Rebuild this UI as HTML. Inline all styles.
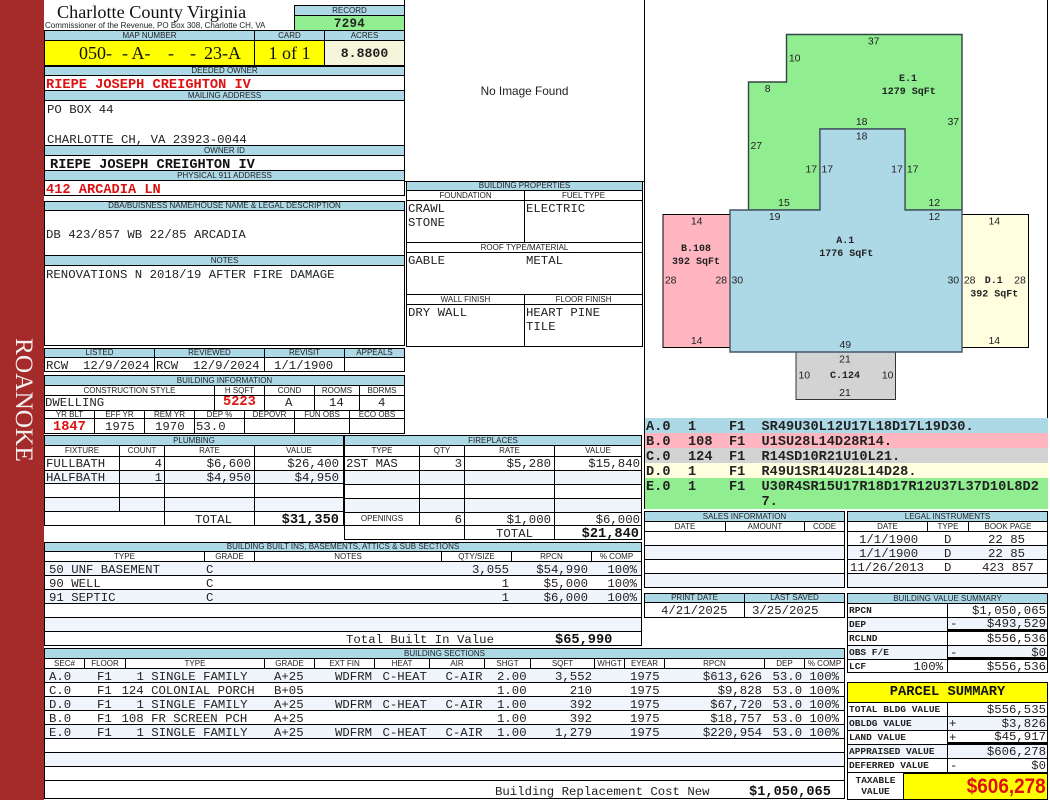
<!DOCTYPE html>
<html><head><meta charset="utf-8"><title>Charlotte County Virginia</title>
<style>
html,body{margin:0;padding:0;background:#fff}
body{position:relative;width:1050px;height:800px;overflow:hidden}
.c{position:absolute;box-sizing:border-box;border:1px solid #000;display:flex;align-items:center;justify-content:center;white-space:pre;overflow:hidden;font:8px/1 "Liberation Sans",sans-serif;color:#222;background:#fff}
.h{background:#add8e6}
.a{background:#f0f4fb}
.t{position:absolute;font:12.33px/14px "Liberation Mono",monospace;white-space:pre;color:#222;margin-top:1px}
.b{font-weight:bold;font-size:13.67px;color:#111;margin-top:2px}
.r{color:#dd1111}
.s{font:8px/14px "Liberation Sans",sans-serif}
.l{font:bold 9.5px/14px "Liberation Mono",monospace;color:#222}
.lg{font:bold 13.6px/15px "Liberation Mono",monospace;color:#222}
.y{font:18px/24px "Liberation Serif",serif;color:#111;margin-top:0}
.v{position:absolute;background:#000}
.n{text-anchor:middle;font:10.5px "Liberation Sans",sans-serif;fill:#222}
.m{text-anchor:middle;font:bold 10px "Liberation Mono",monospace;fill:#222}
</style></head><body>

<div style="position:absolute;left:0;top:0;width:44px;height:800px;background:#a52a2a"></div>
<div style="position:absolute;left:0;top:338px;width:47px;height:126px;writing-mode:vertical-rl;font:25.33px/47px 'Liberation Serif',serif;color:#f4eeee;white-space:nowrap">ROANOKE</div>

<div class="t" style="left:57px;top:2px;margin-top:0;font:18.2px/20px 'Liberation Serif',serif;color:#111">Charlotte County Virginia</div>
<div class="t s" style="left:45px;top:18px;font-size:8px">Commissioner of the Revenue, PO Box 308, Charlotte CH, VA</div>

<div class="c h" style="left:294px;top:5px;width:111px;height:11px">RECORD</div>
<div class="c" style="left:294px;top:15px;width:111px;height:16px;padding-top:2px;background:#90ee90;font:bold 12.5px 'Liberation Mono',monospace;letter-spacing:.3px">7294</div>

<div class="c h" style="left:44px;top:30px;width:211px;height:11px">MAP NUMBER</div>
<div class="c h" style="left:254px;top:30px;width:71px;height:11px">CARD</div>
<div class="c h" style="left:324px;top:30px;width:81px;height:11px">ACRES</div>
<div class="c" style="left:44px;top:40px;width:211px;height:26px;background:#ffff00"></div>
<div class="t y" style="left:79px;top:41px">050-</div>
<div class="t y" style="left:122px;top:41px">- A-</div>
<div class="t y" style="left:168px;top:41px">-</div>
<div class="t y" style="left:190px;top:41px">-</div>
<div class="t y" style="left:204px;top:41px">23-A</div>
<div class="c" style="left:254px;top:40px;width:71px;height:26px;background:#ffff00;font:18px 'Liberation Serif',serif;color:#111">1 of 1</div>
<div class="c" style="left:324px;top:40px;width:81px;height:26px;background:#f5f5dc;font:bold 13.2px 'Liberation Mono',monospace">8.8800</div>

<div class="c h" style="left:44px;top:66px;width:361px;height:10px">DEEDED OWNER</div>
<div class="c" style="left:44px;top:75px;width:361px;height:16px"></div>
<div class="t b r" style="left:46px;top:77px">RIEPE JOSEPH CREIGHTON IV</div>
<div class="c h" style="left:44px;top:90px;width:361px;height:11px">MAILING ADDRESS</div>
<div class="c" style="left:44px;top:100px;width:361px;height:46px"></div>
<div class="t" style="left:47px;top:102px">PO BOX 44</div>
<div class="t" style="left:47px;top:132px">CHARLOTTE CH, VA 23923-0044</div>
<div class="c h" style="left:44px;top:145px;width:361px;height:11px">OWNER ID</div>
<div class="c" style="left:44px;top:155px;width:361px;height:16px"></div>
<div class="t b" style="left:50px;top:157px">RIEPE JOSEPH CREIGHTON IV</div>
<div class="c h" style="left:44px;top:170px;width:361px;height:11px">PHYSICAL 911 ADDRESS</div>
<div class="c" style="left:44px;top:180px;width:361px;height:16px"></div>
<div class="t b r" style="left:46px;top:182px">412 ARCADIA LN</div>

<div class="c h" style="left:44px;top:201px;width:361px;height:10px">DBA/BUISNESS NAME/HOUSE NAME &amp; LEGAL DESCRIPTION</div>
<div class="c" style="left:44px;top:210px;width:361px;height:46px"></div>
<div class="t" style="left:46px;top:227px">DB 423/857 WB 22/85 ARCADIA</div>
<div class="c h" style="left:44px;top:255px;width:361px;height:11px">NOTES</div>
<div class="c" style="left:44px;top:265px;width:361px;height:81px"></div>
<div class="t" style="left:46px;top:267px">RENOVATIONS N 2018/19 AFTER FIRE DAMAGE</div>

<div class="c h" style="left:44px;top:348px;width:111px;height:10px">LISTED</div>
<div class="c h" style="left:154px;top:348px;width:111px;height:10px">REVIEWED</div>
<div class="c h" style="left:264px;top:348px;width:81px;height:10px">REVISIT</div>
<div class="c h" style="left:344px;top:348px;width:61px;height:10px">APPEALS</div>
<div class="c" style="left:44px;top:357px;width:111px;height:15px"></div>
<div class="c" style="left:154px;top:357px;width:111px;height:15px"></div>
<div class="c" style="left:264px;top:357px;width:81px;height:15px"></div>
<div class="c" style="left:344px;top:357px;width:61px;height:15px"></div>
<div class="t" style="left:46px;top:358px">RCW  12/9/2024</div>
<div class="t" style="left:156px;top:358px">RCW  12/9/2024</div>
<div class="t" style="left:274px;top:358px">1/1/1900</div>

<div class="c h" style="left:44px;top:375px;width:361px;height:11px">BUILDING INFORMATION</div>
<div class="c" style="left:44px;top:385px;width:171px;height:11px">CONSTRUCTION STYLE</div>
<div class="c" style="left:214px;top:385px;width:51px;height:11px">H SQFT</div>
<div class="c" style="left:264px;top:385px;width:51px;height:11px">COND</div>
<div class="c" style="left:314px;top:385px;width:46px;height:11px">ROOMS</div>
<div class="c" style="left:359px;top:385px;width:46px;height:11px">BDRMS</div>
<div class="c" style="left:44px;top:395px;width:171px;height:16px"></div>
<div class="c" style="left:214px;top:395px;width:51px;height:16px"></div>
<div class="c" style="left:264px;top:395px;width:51px;height:16px"></div>
<div class="c" style="left:314px;top:395px;width:46px;height:16px"></div>
<div class="c" style="left:359px;top:395px;width:46px;height:16px"></div>
<div class="t" style="left:45px;top:395px">DWELLING</div>
<div class="t b r" style="left:223px;top:394px">5223</div>
<div class="t" style="left:285px;top:395px">A</div>
<div class="t" style="left:329px;top:395px">14</div>
<div class="t" style="left:378px;top:395px">4</div>

<div class="c" style="left:44px;top:410px;width:51px;height:9px">YR BLT</div>
<div class="c" style="left:94px;top:410px;width:51px;height:9px">EFF YR</div>
<div class="c" style="left:144px;top:410px;width:51px;height:9px">REM YR</div>
<div class="c" style="left:194px;top:410px;width:51px;height:9px">DEP %</div>
<div class="c" style="left:244px;top:410px;width:51px;height:9px">DEPOVR</div>
<div class="c" style="left:294px;top:410px;width:56px;height:9px">FUN OBS</div>
<div class="c" style="left:349px;top:410px;width:56px;height:9px">ECO OBS</div>
<div class="c" style="left:44px;top:418px;width:51px;height:16px"></div>
<div class="c" style="left:94px;top:418px;width:51px;height:16px"></div>
<div class="c" style="left:144px;top:418px;width:51px;height:16px"></div>
<div class="c" style="left:194px;top:418px;width:51px;height:16px"></div>
<div class="c" style="left:244px;top:418px;width:51px;height:16px"></div>
<div class="c" style="left:294px;top:418px;width:56px;height:16px"></div>
<div class="c" style="left:349px;top:418px;width:56px;height:16px"></div>
<div class="t b r" style="left:53px;top:419px">1847</div>
<div class="t" style="left:105px;top:419px">1975</div>
<div class="t" style="left:155px;top:419px">1970</div>
<div class="t" style="left:196px;top:419px">53.0</div>

<!-- image box -->
<div class="c" style="left:404px;top:-1px;width:241px;height:183px;background:none;font:11.8px 'Liberation Sans',sans-serif">No Image Found</div>

<!-- building properties -->
<div class="c h" style="left:406px;top:181px;width:237px;height:10px">BUILDING PROPERTIES</div>
<div class="c" style="left:406px;top:190px;width:119px;height:11px">FOUNDATION</div>
<div class="c" style="left:524px;top:190px;width:119px;height:11px">FUEL TYPE</div>
<div class="c" style="left:406px;top:200px;width:119px;height:43px"></div>
<div class="c" style="left:524px;top:200px;width:119px;height:43px"></div>
<div class="c" style="left:406px;top:242px;width:237px;height:11px">ROOF TYPE/MATERIAL</div>
<div class="c" style="left:406px;top:252px;width:237px;height:43px"></div>
<div class="c" style="left:406px;top:294px;width:119px;height:11px">WALL FINISH</div>
<div class="c" style="left:524px;top:294px;width:119px;height:11px">FLOOR FINISH</div>
<div class="c" style="left:406px;top:304px;width:119px;height:43px"></div>
<div class="c" style="left:524px;top:304px;width:119px;height:43px"></div>
<div class="t" style="left:408px;top:201px">CRAWL</div>
<div class="t" style="left:408px;top:215px">STONE</div>
<div class="t" style="left:526px;top:201px">ELECTRIC</div>
<div class="t" style="left:408px;top:253px">GABLE</div>
<div class="t" style="left:526px;top:253px">METAL</div>
<div class="t" style="left:408px;top:305px">DRY WALL</div>
<div class="t" style="left:526px;top:305px">HEART PINE</div>
<div class="t" style="left:526px;top:319px">TILE</div>

<!-- sketch -->
<div class="c" style="left:644px;top:-1px;width:404px;height:420px"></div>
<svg style="position:absolute;left:0;top:0" width="1050" height="800">
<polygon points="663,214.5 730,214.5 730,347.5 663,347.5" fill="#ffb6c1" stroke="#000" stroke-width="1"/>
<polygon points="962,214.5 1028.5,214.5 1028.5,347.5 962,347.5" fill="#ffffe0" stroke="#000" stroke-width="1"/>
<polygon points="796,352 895.5,352 895.5,399.5 796,399.5" fill="#d3d3d3" stroke="#333" stroke-width="1"/>
<polygon points="786.5,34.5 962,34.5 962,210 905,210 905,129 820,129 820,210 748.5,210 748.5,82 786.5,82" fill="#90ee90" stroke="#344" stroke-width="1.4"/>
<polygon points="730,210 820,210 820,129 905,129 905,210 962,210 962,352 730,352" fill="#add8e6" stroke="#456" stroke-width="1.4"/>
<g class="nn">
<text class="n" x="873.7" y="44.5">37</text>
<text class="n" x="794.7" y="61.5">10</text>
<text class="n" x="767.7" y="92">8</text>
<text class="n" x="861.7" y="125">18</text>
<text class="n" x="953.3" y="125">37</text>
<text class="n" x="861.7" y="139.5">18</text>
<text class="n" x="756.3" y="149">27</text>
<text class="n" x="811.3" y="172.5">17</text>
<text class="n" x="827.3" y="172.5">17</text>
<text class="n" x="897" y="172.5">17</text>
<text class="n" x="912.7" y="172.5">17</text>
<text class="n" x="784" y="206">15</text>
<text class="n" x="934.3" y="206">12</text>
<text class="n" x="774.7" y="220">19</text>
<text class="n" x="934.3" y="220">12</text>
<text class="n" x="696.7" y="224.5">14</text>
<text class="n" x="994.3" y="224.5">14</text>
<text class="n" x="670.7" y="283.5">28</text>
<text class="n" x="721.3" y="283.5">28</text>
<text class="n" x="737.3" y="283.5">30</text>
<text class="n" x="953.3" y="283.5">30</text>
<text class="n" x="969.7" y="283.5">28</text>
<text class="n" x="1020" y="283.5">28</text>
<text class="n" x="696.7" y="344">14</text>
<text class="n" x="994.3" y="344">14</text>
<text class="n" x="845.3" y="348">49</text>
<text class="n" x="845" y="362.5">21</text>
<text class="n" x="804.3" y="378.5">10</text>
<text class="n" x="887.7" y="378.5">10</text>
<text class="n" x="845" y="396">21</text>
<text class="m" x="908" y="81">E.1</text>
<text class="m" x="908.7" y="94">1279 SqFt</text>
<text class="m" x="845.3" y="243">A.1</text>
<text class="m" x="846.3" y="256">1776 SqFt</text>
<text class="m" x="696" y="251">B.108</text>
<text class="m" x="696" y="264">392 SqFt</text>
<text class="m" x="993.7" y="283">D.1</text>
<text class="m" x="994.3" y="296.5">392 SqFt</text>
<text class="m" x="845" y="378">C.124</text>
</g>
</svg>

<!-- legend -->
<div style="position:absolute;left:644px;top:418px;width:404px;height:91px;background:#90ee90;border-left:1px solid #000;box-sizing:border-box"></div>
<div style="position:absolute;left:645px;top:418px;width:403px;height:15px;background:#add8e6"></div>
<div style="position:absolute;left:645px;top:433px;width:403px;height:15px;background:#ffb6c1"></div>
<div style="position:absolute;left:645px;top:448px;width:403px;height:15px;background:#d3d3d3"></div>
<div style="position:absolute;left:645px;top:463px;width:403px;height:15px;background:#ffffe0"></div>
<div class="t lg" style="left:646px;top:419px">A.0</div><div class="t lg" style="left:688px;top:419px">1</div><div class="t lg" style="left:729px;top:419px">F1</div><div class="t lg" style="left:761.5px;top:419px">SR49U30L12U17L18D17L19D30.</div>
<div class="t lg" style="left:646px;top:434px">B.0</div><div class="t lg" style="left:688px;top:434px">108</div><div class="t lg" style="left:729px;top:434px">F1</div><div class="t lg" style="left:761.5px;top:434px">U1SU28L14D28R14.</div>
<div class="t lg" style="left:646px;top:449px">C.0</div><div class="t lg" style="left:688px;top:449px">124</div><div class="t lg" style="left:729px;top:449px">F1</div><div class="t lg" style="left:761.5px;top:449px">R14SD10R21U10L21.</div>
<div class="t lg" style="left:646px;top:464px">D.0</div><div class="t lg" style="left:688px;top:464px">1</div><div class="t lg" style="left:729px;top:464px">F1</div><div class="t lg" style="left:761.5px;top:464px">R49U1SR14U28L14D28.</div>
<div class="t lg" style="left:646px;top:479px">E.0</div><div class="t lg" style="left:688px;top:479px">1</div><div class="t lg" style="left:729px;top:479px">F1</div><div class="t lg" style="left:761.5px;top:479px">U30R4SR15U17R18D17R12U37L37D10L8D2</div>
<div class="t lg" style="left:761.5px;top:494px">7.</div>

<!-- plumbing -->
<div class="c h" style="left:44px;top:435px;width:300px;height:11px">PLUMBING</div>
<div class="c" style="left:44px;top:445px;width:76px;height:12px">FIXTURE</div>
<div class="c" style="left:119px;top:445px;width:46px;height:12px">COUNT</div>
<div class="c" style="left:164px;top:445px;width:91px;height:12px">RATE</div>
<div class="c" style="left:254px;top:445px;width:90px;height:12px">VALUE</div>
<div class="c" style="left:44px;top:456px;width:76px;height:15px"></div><div class="c" style="left:119px;top:456px;width:46px;height:15px"></div><div class="c" style="left:164px;top:456px;width:91px;height:15px"></div><div class="c" style="left:254px;top:456px;width:90px;height:15px"></div>
<div class="c a" style="left:44px;top:470px;width:76px;height:14px"></div><div class="c a" style="left:119px;top:470px;width:46px;height:14px"></div><div class="c a" style="left:164px;top:470px;width:91px;height:14px"></div><div class="c a" style="left:254px;top:470px;width:90px;height:14px"></div>
<div class="c" style="left:44px;top:483px;width:76px;height:15px"></div><div class="c" style="left:119px;top:483px;width:46px;height:15px"></div><div class="c" style="left:164px;top:483px;width:91px;height:15px"></div><div class="c" style="left:254px;top:483px;width:90px;height:15px"></div>
<div class="c a" style="left:44px;top:497px;width:76px;height:15px"></div><div class="c a" style="left:119px;top:497px;width:46px;height:15px"></div><div class="c a" style="left:164px;top:497px;width:91px;height:15px"></div><div class="c a" style="left:254px;top:497px;width:90px;height:15px"></div>
<div class="c" style="left:44px;top:511px;width:121px;height:15px"></div><div class="c" style="left:164px;top:511px;width:91px;height:15px"></div><div class="c" style="left:254px;top:511px;width:90px;height:15px"></div>
<div class="t" style="left:46px;top:456px">FULLBATH</div><div class="t" style="right:888px;top:456px">4</div><div class="t" style="right:799px;top:456px">$6,600</div><div class="t" style="right:711px;top:456px">$26,400</div>
<div class="t" style="left:46px;top:470px">HALFBATH</div><div class="t" style="right:888px;top:470px">1</div><div class="t" style="right:799px;top:470px">$4,950</div><div class="t" style="right:711px;top:470px">$4,950</div>
<div class="t" style="left:195px;top:512px">TOTAL</div><div class="t b" style="right:711px;top:512px">$31,350</div>

<!-- fireplaces -->
<div class="c h" style="left:344px;top:435px;width:298px;height:11px">FIREPLACES</div>
<div class="c" style="left:344px;top:445px;width:76px;height:12px">TYPE</div>
<div class="c" style="left:419px;top:445px;width:46px;height:12px">QTY</div>
<div class="c" style="left:464px;top:445px;width:91px;height:12px">RATE</div>
<div class="c" style="left:554px;top:445px;width:88px;height:12px">VALUE</div>
<div class="c" style="left:344px;top:456px;width:76px;height:15px"></div><div class="c" style="left:419px;top:456px;width:46px;height:15px"></div><div class="c" style="left:464px;top:456px;width:91px;height:15px"></div><div class="c" style="left:554px;top:456px;width:88px;height:15px"></div>
<div class="c a" style="left:344px;top:470px;width:76px;height:15px"></div><div class="c a" style="left:419px;top:470px;width:46px;height:15px"></div><div class="c a" style="left:464px;top:470px;width:91px;height:15px"></div><div class="c a" style="left:554px;top:470px;width:88px;height:15px"></div>
<div class="c" style="left:344px;top:484px;width:76px;height:15px"></div><div class="c" style="left:419px;top:484px;width:46px;height:15px"></div><div class="c" style="left:464px;top:484px;width:91px;height:15px"></div><div class="c" style="left:554px;top:484px;width:88px;height:15px"></div>
<div class="c a" style="left:344px;top:498px;width:76px;height:15px"></div><div class="c a" style="left:419px;top:498px;width:46px;height:15px"></div><div class="c a" style="left:464px;top:498px;width:91px;height:15px"></div><div class="c a" style="left:554px;top:498px;width:88px;height:15px"></div>
<div class="c" style="left:344px;top:512px;width:76px;height:14px">OPENINGS</div><div class="c" style="left:419px;top:512px;width:46px;height:14px"></div><div class="c" style="left:464px;top:512px;width:91px;height:14px"></div><div class="c" style="left:554px;top:512px;width:88px;height:14px"></div>
<div class="c" style="left:344px;top:525px;width:121px;height:15px"></div><div class="c" style="left:464px;top:525px;width:91px;height:15px"></div><div class="c" style="left:554px;top:525px;width:88px;height:15px"></div>
<div class="t" style="left:346px;top:456px">2ST MAS</div><div class="t" style="right:588px;top:456px">3</div><div class="t" style="right:499px;top:456px">$5,280</div><div class="t" style="right:410px;top:456px">$15,840</div>
<div class="t" style="right:588px;top:512px">6</div><div class="t" style="right:499px;top:512px">$1,000</div><div class="t" style="right:410px;top:512px">$6,000</div>
<div class="t" style="left:496px;top:526px">TOTAL</div><div class="t b" style="right:411px;top:526px">$21,840</div>

<!-- sales -->
<div class="c h" style="left:644px;top:511px;width:201px;height:11px">SALES INFORMATION</div>
<div class="c" style="left:644px;top:521px;width:82px;height:11px">DATE</div>
<div class="c" style="left:725px;top:521px;width:80px;height:11px">AMOUNT</div>
<div class="c" style="left:804px;top:521px;width:41px;height:11px">CODE</div>
<div class="c" style="left:644px;top:531px;width:201px;height:15px"></div>
<div class="c a" style="left:644px;top:545px;width:201px;height:15px"></div>
<div class="c" style="left:644px;top:559px;width:201px;height:15px"></div>
<div class="c a" style="left:644px;top:573px;width:201px;height:15px"></div>

<!-- legal -->
<div class="c h" style="left:847px;top:511px;width:201px;height:11px">LEGAL INSTRUMENTS</div>
<div class="c" style="left:847px;top:521px;width:81px;height:11px">DATE</div>
<div class="c" style="left:927px;top:521px;width:42px;height:11px">TYPE</div>
<div class="c" style="left:968px;top:521px;width:80px;height:11px">BOOK PAGE</div>
<div class="c" style="left:847px;top:531px;width:201px;height:15px"></div>
<div class="c a" style="left:847px;top:545px;width:201px;height:15px"></div>
<div class="c" style="left:847px;top:559px;width:201px;height:15px"></div>
<div class="c a" style="left:847px;top:573px;width:201px;height:15px"></div>
<div class="t" style="left:859px;top:532px">1/1/1900</div><div class="t" style="left:944px;top:532px">D</div><div class="t" style="left:988px;top:532px">22 85</div>
<div class="t" style="left:859px;top:546px">1/1/1900</div><div class="t" style="left:944px;top:546px">D</div><div class="t" style="left:988px;top:546px">22 85</div>
<div class="t" style="left:850px;top:560px">11/26/2013</div><div class="t" style="left:944px;top:560px">D</div><div class="t" style="left:982px;top:560px">423 857</div>

<!-- print date -->
<div class="c h" style="left:644px;top:593px;width:101px;height:10px">PRINT DATE</div>
<div class="c h" style="left:744px;top:593px;width:101px;height:10px">LAST SAVED</div>
<div class="c" style="left:644px;top:602px;width:101px;height:16px"></div>
<div class="c" style="left:744px;top:602px;width:101px;height:16px"></div>
<div class="t" style="left:661px;top:603px">4/21/2025</div>
<div class="t" style="left:752px;top:603px">3/25/2025</div>

<!-- built ins -->
<div class="c h" style="left:44px;top:542px;width:598px;height:10px">BUILDING BUILT INS, BASEMENTS, ATTICS &amp; SUB SECTIONS</div>
<div class="c" style="left:44px;top:551px;width:161px;height:11px">TYPE</div>
<div class="c" style="left:204px;top:551px;width:51px;height:11px">GRADE</div>
<div class="c" style="left:254px;top:551px;width:188px;height:11px">NOTES</div>
<div class="c" style="left:441px;top:551px;width:71px;height:11px">QTY/SIZE</div>
<div class="c" style="left:511px;top:551px;width:81px;height:11px">RPCN</div>
<div class="c" style="left:591px;top:551px;width:51px;height:11px">% COMP</div>
<div class="c a" style="left:44px;top:561px;width:598px;height:15px"></div>
<div class="c" style="left:44px;top:575px;width:598px;height:15px"></div>
<div class="c a" style="left:44px;top:589px;width:598px;height:15px"></div>
<div class="c" style="left:44px;top:603px;width:598px;height:15px"></div>
<div class="c a" style="left:44px;top:617px;width:598px;height:15px"></div>
<div class="c" style="left:44px;top:631px;width:598px;height:15px"></div>
<div class="t" style="left:49px;top:562px">50 UNF BASEMENT</div><div class="t" style="left:206px;top:562px">C</div><div class="t" style="right:541px;top:562px">3,055</div><div class="t" style="right:462px;top:562px">$54,990</div><div class="t" style="right:413px;top:562px">100%</div>
<div class="t" style="left:49px;top:576px">90 WELL</div><div class="t" style="left:206px;top:576px">C</div><div class="t" style="right:541px;top:576px">1</div><div class="t" style="right:462px;top:576px">$5,000</div><div class="t" style="right:413px;top:576px">100%</div>
<div class="t" style="left:49px;top:590px">91 SEPTIC</div><div class="t" style="left:206px;top:590px">C</div><div class="t" style="right:541px;top:590px">1</div><div class="t" style="right:462px;top:590px">$6,000</div><div class="t" style="right:413px;top:590px">100%</div>
<div class="t" style="left:346px;top:632px">Total Built In Value</div><div class="t b" style="left:555px;top:632px">$65,990</div>

<!-- value summary -->
<div class="c h" style="left:847px;top:593px;width:201px;height:11px">BUILDING VALUE SUMMARY</div>
<div class="c" style="left:847px;top:603px;width:101px;height:15px"></div><div class="c" style="left:947px;top:603px;width:101px;height:15px"></div>
<div class="c a" style="left:847px;top:617px;width:101px;height:15px"></div><div class="c a" style="left:947px;top:617px;width:101px;height:15px"></div>
<div class="c" style="left:847px;top:631px;width:101px;height:15px"></div><div class="c" style="left:947px;top:631px;width:101px;height:15px"></div>
<div class="c a" style="left:847px;top:645px;width:101px;height:15px"></div><div class="c a" style="left:947px;top:645px;width:101px;height:15px"></div>
<div class="c" style="left:847px;top:659px;width:101px;height:14px"></div><div class="c" style="left:947px;top:659px;width:101px;height:14px"></div>
<div class="v" style="left:947px;top:629px;width:101px;height:3px"></div>
<div class="v" style="left:947px;top:657px;width:101px;height:3px"></div>
<div class="t l" style="left:849px;top:603px">RPCN</div><div class="t" style="right:4px;top:603px">$1,050,065</div>
<div class="t l" style="left:849px;top:617px">DEP</div><div class="t" style="left:950px;top:616px">-</div><div class="t" style="right:4px;top:616px">$493,529</div>
<div class="t l" style="left:849px;top:631px">RCLND</div><div class="t" style="right:4px;top:631px">$556,536</div>
<div class="t l" style="left:849px;top:645px">OBS F/E</div><div class="t" style="left:950px;top:645px">-</div><div class="t" style="right:4px;top:645px">$0</div>
<div class="t l" style="left:849px;top:659px">LCF</div><div class="t" style="right:107px;top:659px">100%</div><div class="t" style="right:4px;top:659px">$556,536</div>

<!-- parcel summary -->
<div class="c" style="left:847px;top:682px;width:201px;height:21px;background:#ffff00;font:bold 13.75px 'Liberation Mono',monospace;color:#111">PARCEL SUMMARY</div>
<div class="c" style="left:847px;top:702px;width:101px;height:15px"></div><div class="c" style="left:947px;top:702px;width:101px;height:15px"></div>
<div class="c a" style="left:847px;top:716px;width:101px;height:15px"></div><div class="c a" style="left:947px;top:716px;width:101px;height:15px"></div>
<div class="c" style="left:847px;top:730px;width:101px;height:15px"></div><div class="c" style="left:947px;top:730px;width:101px;height:15px"></div>
<div class="c a" style="left:847px;top:744px;width:101px;height:15px"></div><div class="c a" style="left:947px;top:744px;width:101px;height:15px"></div>
<div class="c" style="left:847px;top:758px;width:101px;height:15px"></div><div class="c" style="left:947px;top:758px;width:101px;height:15px"></div>
<div class="v" style="left:947px;top:742px;width:101px;height:3px"></div>
<div class="t l" style="left:849px;top:702px">TOTAL BLDG VALUE</div><div class="t" style="right:4px;top:702px">$556,535</div>
<div class="t l" style="left:849px;top:716px">OBLDG VALUE</div><div class="t" style="left:949px;top:716px">+</div><div class="t" style="right:4px;top:716px">$3,826</div>
<div class="t l" style="left:849px;top:730px">LAND VALUE</div><div class="t" style="left:949px;top:730px">+</div><div class="t" style="right:4px;top:729px">$45,917</div>
<div class="t l" style="left:849px;top:744px">APPRAISED VALUE</div><div class="t" style="right:4px;top:744px">$606,278</div>
<div class="t l" style="left:849px;top:758px">DEFERRED VALUE</div><div class="t" style="left:950px;top:758px">-</div><div class="t" style="right:4px;top:758px">$0</div>
<div class="c" style="left:847px;top:772px;width:57px;height:28px;font:bold 9.5px/11px 'Liberation Mono',monospace;white-space:normal;text-align:center">TAXABLE VALUE</div>
<div class="c" style="left:903px;top:772px;width:145px;height:28px;background:#ffff00;border-top-width:2px;justify-content:flex-end;padding-right:1px;font:bold 21.5px 'Liberation Sans',sans-serif;color:#dd1111"><span style="display:inline-block;transform:scaleX(.88);transform-origin:right center">$606,278</span></div>

<!-- building sections -->
<div class="c h" style="left:44px;top:648px;width:801px;height:11px">BUILDING SECTIONS</div>
<div class="c" style="left:44px;top:658px;width:41px;height:11px">SEC#</div>
<div class="c" style="left:84px;top:658px;width:42px;height:11px">FLOOR</div>
<div class="c" style="left:125px;top:658px;width:140px;height:11px">TYPE</div>
<div class="c" style="left:264px;top:658px;width:51px;height:11px">GRADE</div>
<div class="c" style="left:314px;top:658px;width:61px;height:11px">EXT FIN</div>
<div class="c" style="left:374px;top:658px;width:56px;height:11px">HEAT</div>
<div class="c" style="left:429px;top:658px;width:56px;height:11px">AIR</div>
<div class="c" style="left:484px;top:658px;width:47px;height:11px">SHGT</div>
<div class="c" style="left:530px;top:658px;width:65px;height:11px">SQFT</div>
<div class="c" style="left:594px;top:658px;width:31px;height:11px">WHGT</div>
<div class="c" style="left:624px;top:658px;width:41px;height:11px">EYEAR</div>
<div class="c" style="left:664px;top:658px;width:101px;height:11px">RPCN</div>
<div class="c" style="left:764px;top:658px;width:41px;height:11px">DEP</div>
<div class="c" style="left:804px;top:658px;width:41px;height:11px">% COMP</div>
<div class="c a" style="left:44px;top:668px;width:801px;height:15px"></div>
<div class="c" style="left:44px;top:682px;width:801px;height:15px"></div>
<div class="c a" style="left:44px;top:696px;width:801px;height:15px"></div>
<div class="c" style="left:44px;top:710px;width:801px;height:15px"></div>
<div class="c a" style="left:44px;top:724px;width:801px;height:15px"></div>
<div class="c" style="left:44px;top:738px;width:801px;height:15px"></div>
<div class="c a" style="left:44px;top:752px;width:801px;height:15px"></div>
<div class="c" style="left:44px;top:766px;width:801px;height:15px"></div>
<div class="c" style="left:44px;top:780px;width:801px;height:19px"></div>

<div class="t" style="left:49px;top:669px">A.0</div><div class="t" style="left:97px;top:669px">F1</div><div class="t" style="left:136.5px;top:669px">1 SINGLE FAMILY</div><div class="t" style="left:274px;top:669px">A+25</div><div class="t" style="left:335px;top:669px">WDFRM</div><div class="t" style="left:382.5px;top:669px">C-HEAT</div><div class="t" style="left:445.5px;top:669px">C-AIR</div><div class="t" style="left:497px;top:669px">2.00</div><div class="t" style="right:458px;top:669px">3,552</div><div class="t" style="left:630px;top:669px">1975</div><div class="t" style="right:288px;top:669px">$613,626</div><div class="t" style="left:772.5px;top:669px">53.0</div><div class="t" style="right:211px;top:669px">100%</div>
<div class="t" style="left:49px;top:683px">C.0</div><div class="t" style="left:97px;top:683px">F1</div><div class="t" style="left:121.5px;top:683px">124 COLONIAL PORCH</div><div class="t" style="left:274px;top:683px">B+05</div><div class="t" style="left:497px;top:683px">1.00</div><div class="t" style="right:458px;top:683px">210</div><div class="t" style="left:630px;top:683px">1975</div><div class="t" style="right:288px;top:683px">$9,828</div><div class="t" style="left:772.5px;top:683px">53.0</div><div class="t" style="right:211px;top:683px">100%</div>
<div class="t" style="left:49px;top:697px">D.0</div><div class="t" style="left:97px;top:697px">F1</div><div class="t" style="left:136.5px;top:697px">1 SINGLE FAMILY</div><div class="t" style="left:274px;top:697px">A+25</div><div class="t" style="left:335px;top:697px">WDFRM</div><div class="t" style="left:382.5px;top:697px">C-HEAT</div><div class="t" style="left:445.5px;top:697px">C-AIR</div><div class="t" style="left:497px;top:697px">1.00</div><div class="t" style="right:458px;top:697px">392</div><div class="t" style="left:630px;top:697px">1975</div><div class="t" style="right:288px;top:697px">$67,720</div><div class="t" style="left:772.5px;top:697px">53.0</div><div class="t" style="right:211px;top:697px">100%</div>
<div class="t" style="left:49px;top:711px">B.0</div><div class="t" style="left:97px;top:711px">F1</div><div class="t" style="left:121.5px;top:711px">108 FR SCREEN PCH</div><div class="t" style="left:274px;top:711px">A+25</div><div class="t" style="left:497px;top:711px">1.00</div><div class="t" style="right:458px;top:711px">392</div><div class="t" style="left:630px;top:711px">1975</div><div class="t" style="right:288px;top:711px">$18,757</div><div class="t" style="left:772.5px;top:711px">53.0</div><div class="t" style="right:211px;top:711px">100%</div>
<div class="t" style="left:49px;top:725px">E.0</div><div class="t" style="left:97px;top:725px">F1</div><div class="t" style="left:136.5px;top:725px">1 SINGLE FAMILY</div><div class="t" style="left:274px;top:725px">A+25</div><div class="t" style="left:335px;top:725px">WDFRM</div><div class="t" style="left:382.5px;top:725px">C-HEAT</div><div class="t" style="left:445.5px;top:725px">C-AIR</div><div class="t" style="left:497px;top:725px">1.00</div><div class="t" style="right:458px;top:725px">1,279</div><div class="t" style="left:630px;top:725px">1975</div><div class="t" style="right:288px;top:725px">$220,954</div><div class="t" style="left:772.5px;top:725px">53.0</div><div class="t" style="right:211px;top:725px">100%</div>
<div class="t" style="left:495px;top:784px">Building Replacement Cost New</div><div class="t b" style="left:749px;top:784px">$1,050,065</div>

</body></html>
